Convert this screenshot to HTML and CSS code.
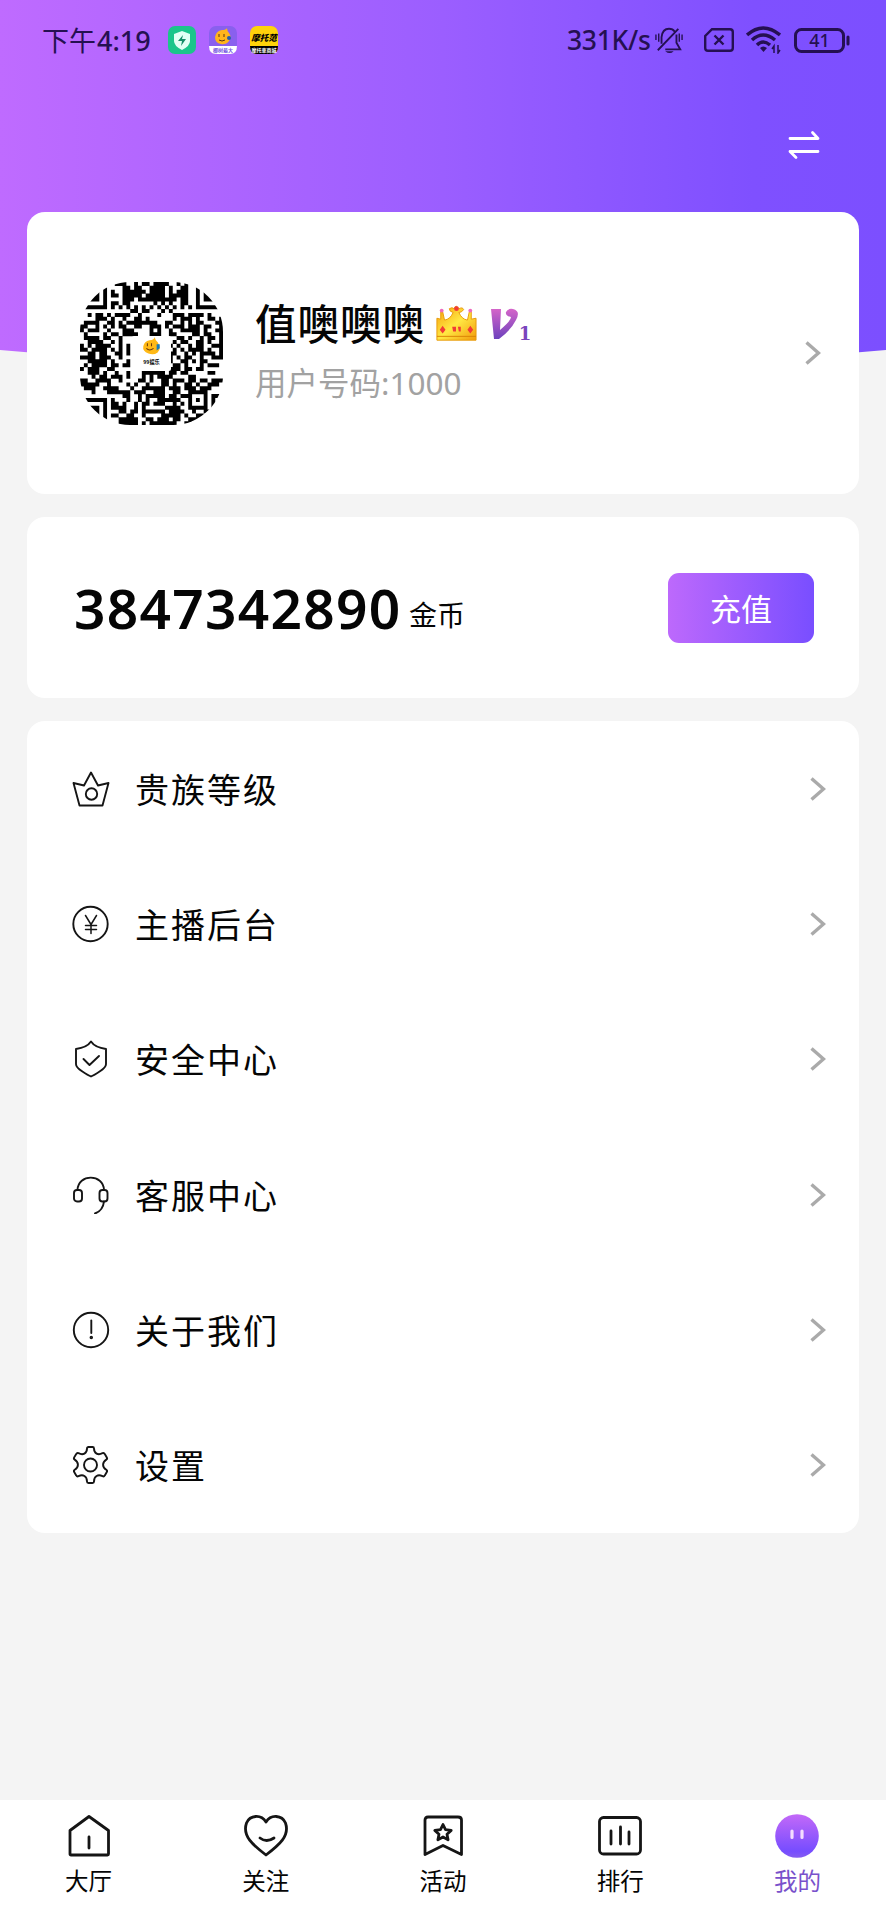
FILE: index.html
```html
<!DOCTYPE html>
<html lang="zh-CN">
<head>
<meta charset="utf-8">
<title>我的</title>
<link rel="stylesheet" href="styles.css">
</head>
<body>
<div class="screen">
  <svg class="hero-bg" viewBox="0 0 886 372" preserveAspectRatio="none">
    <defs><linearGradient id="hero"><stop offset="0" stop-color="#bf6bff"/><stop offset=".5" stop-color="#9b5eff"/><stop offset=".85" stop-color="#7f50ff"/><stop offset="1" stop-color="#7c4fff"/></linearGradient></defs>
    <path fill="url(#hero)" d="M0 0H886V350Q443 390 0 350Z"/>
  </svg>
  <header class="status">
    <span class="time">下午<span class="digits">4:19</span></span>
    <svg class="app-icon" viewBox="0 0 28 28"><rect width="28" height="28" rx="7" fill="#1bc58b"/><path fill="#e3fff5" d="M14 5l8 3v7q0 5-8 9-8-4-8-9V8z"/><path fill="#168c68" d="M15 9l-5 6h4l-1 5 5-7h-4z"/></svg>
    <svg class="app-icon" viewBox="0 0 28 28"><rect width="28" height="28" rx="7" fill="#8960ee"/><path fill="#fff" d="M0 20h28q0 8-7 8H7q-7 0-7-8z"/><path fill="#ffb51c" d="M13 4q4 0 5-2 0 3 2 5 3 4 0 8-3 4-8 3-6-1-6-7 1-6 7-7z"/><path d="M10 8v3M15 8v3M10 14q3 2 6 0" fill="none" stroke="#5a3310"/><circle cx="20" cy="12" r="2" fill="#225caf"/><text x="14" y="26" class="tiny violet">椰树最大</text></svg>
    <svg class="app-icon" viewBox="0 0 28 28"><rect width="28" height="28" rx="7" fill="#ffd30a"/><path d="M0 20h28q0 8-7 8H7q-7 0-7-8z"/><text x="14" y="15" class="moto">摩托范</text><text x="14" y="26" class="tiny white">摩托車商城</text></svg>
    <span class="speed">331K/s</span>
    <svg class="bell" viewBox="0 0 30 28"><g fill="none" stroke="#251052" stroke-width="2"><path d="M7 18V11q1-9 8-9 4 0 6 3M23 8v9l4 7H11M3 25L25 2"/><path d="M1 8v6M4 7v9M26 7v9M29 8v6" stroke-width="1.5"/></g><path fill="#251052" d="M11 26h9q-4 4-9 0z"/></svg>
    <svg class="sim" viewBox="0 0 30 24"><path d="M8 1.200H26q2.800 0 2.800 2.800V20q0 2.800-2.800 2.800H4q-2.800 0-2.800-2.800V8zM10.500 7.500l9 9M19.500 7.500l-9 9" fill="none" stroke="#251052" stroke-width="2.400"/></svg>
    <svg class="wifi" viewBox="0 0 35 28"><g fill="none" stroke="#251052" stroke-width="3.500"><path d="M1 9Q17-5 34 9M6 14Q17 4 29 14M11 19Q17 13 24 19"/><path d="M28 27v-7l-2 3M32 19v8l2-3" stroke-width="1.5"/></g><path fill="#251052" d="M14 22q3-3 7 0l-3.500 4z"/></svg>
    <svg class="battery" viewBox="0 0 56 25"><rect x="1.500" y="1.500" width="48" height="22" rx="6" fill="none" stroke="#251052" stroke-width="3"/><path d="M54 9v7" stroke="#251052" stroke-width="3" stroke-linecap="round"/><text x="25.500" y="18.500" class="percent">41</text></svg>
  </header>
  <div class="tools">
    <svg class="swap" viewBox="0 0 32 30" fill="none" stroke="#fff" stroke-width="2.800" stroke-linecap="round" stroke-linejoin="round"><path d="M2 8.500H30L24.500 2.500M30 21.500H2l6 6"/></svg>
  </div>
  <main class="cards">
    <section class="card profile">
      <div class="avatar">
        <svg id="qr" class="qr" viewBox="0 0 37 37"></svg>
        <svg class="qr-logo" viewBox="0 0 38 34"><rect width="38" height="34" rx="2" fill="#fff"/><path fill="#ffb915" d="M17 4q5 0 5-3 1 4 3 5 4 6 0 10-4 3-9 1-6-2-5-7 1-5 6-6z"/><path d="M15 7v3M19 7v3M14 12q3 3 7 0" fill="none" stroke="#6c3a0b"/><path fill="#167bbd" d="M24 8h3v4l-3 2z"/><text x="19" y="27" class="tiny">99娱乐</text></svg>
      </div>
      <div class="identity">
        <div class="name-row"><h1 class="name">值噢噢噢</h1>
          <svg class="crown" viewBox="0 0 44 40"><defs><linearGradient id="gold" x1="0" x2="1" y2="1"><stop stop-color="#f69b08"/><stop offset=".5" stop-color="#ffe843"/><stop offset="1" stop-color="#f29a0a"/></linearGradient></defs><path d="M2 38V15l4 1V8h2l2 9q6-1 9-8-4-1-4-4 3-2 5 0 2-5 5 0 4-2 5 1-2 3-5 3 3 7 9 8l2-9h2v8l5-1v23z" fill="url(#gold)" stroke="#e89a08"/><path d="M2 34h41" stroke="#d98205"/><g fill="#f13b35"><circle cx="7" cy="7" r="2" fill="#ee6abd"/><circle cx="37" cy="7" r="2" fill="#ee6abd"/><circle cx="22.500" cy="5" r="2.500"/><path d="M8 23l3 4-3 4-3-4zM37 23l3 4-3 4-3-4zM18 24h4v5h-3zM24 24h3v5h-2z"/></g></svg>
          <svg class="vip" viewBox="0 0 44 36"><defs><linearGradient id="v" x2="0" y2="1"><stop stop-color="#d565c9"/><stop offset="1" stop-color="#6d42bd"/></linearGradient></defs><path fill="url(#v)" d="M1 2h10L10 23q11-9 11-13-6-1-5-5 2-4 7-3 8 2 3 11-5 10-17 19H4z"/><text x="35" y="33" class="vip-num">1</text></svg>
        </div>
        <p class="uid">用户号码:1000</p>
      </div>
      <svg class="chevron" viewBox="0 0 16 24"><path d="M1.500 1.500L13.500 12l-12 10.500"/></svg>
    </section>
    <section class="card wallet">
      <span class="coins">3847342890</span><span class="unit">金币</span>
      <button class="recharge">充值</button>
    </section>
    <nav class="card menu">
      <a class="row"><svg class="icon" viewBox="0 0 38 38"><path d="M1.500 13L12 15.500 19 2.500l7 13L36.500 13l-6 22.500H7.500z"/><circle cx="19.500" cy="24" r="5.700"/></svg><span>贵族等级</span><svg class="chevron" viewBox="0 0 16 24"><path d="M1.500 1.500L13.500 12l-12 10.500"/></svg></a>
      <a class="row"><svg class="icon" viewBox="0 0 38 38"><circle cx="18.500" cy="19" r="17.200"/><path d="M13.500 10.500l5.500 9 5.500-9M13.500 20.500h11M13.500 24.500h11M19 20v8.500" stroke-width="1.500"/></svg><span>主播后台</span><svg class="chevron" viewBox="0 0 16 24"><path d="M1.500 1.500L13.500 12l-12 10.500"/></svg></a>
      <a class="row"><svg class="icon" viewBox="0 0 38 38"><path d="M19 1.500Q23 7.500 34 9V24q0 5-15 12.500Q4 29 4 24V9Q15 7.500 19 1.500zM11.500 19l6 6L27 16"/></svg><span>安全中心</span><svg class="chevron" viewBox="0 0 16 24"><path d="M1.500 1.500L13.500 12l-12 10.500"/></svg></a>
      <a class="row"><svg class="icon" viewBox="0 0 38 38"><rect x="2" y="14" width="8" height="11.500" rx="3"/><rect x="27.500" y="14" width="8" height="11.500" rx="3"/><path d="M5.500 14C6-2.500 31.500-2.500 32 14M32 25.500q-1 9-9 12"/></svg><span>客服中心</span><svg class="chevron" viewBox="0 0 16 24"><path d="M1.500 1.500L13.500 12l-12 10.500"/></svg></a>
      <a class="row"><svg class="icon" viewBox="0 0 38 38"><circle cx="19" cy="19" r="17.200"/><path d="M19.300 9.500v12.500"/><circle cx="19.300" cy="26.500" r=".8"/></svg><span>关于我们</span><svg class="chevron" viewBox="0 0 16 24"><path d="M1.500 1.500L13.500 12l-12 10.500"/></svg></a>
      <a class="row"><svg class="icon" viewBox="0 0 38 38"><path d="M15 2.500q0-1.500 1.500-1.500h4q1.500 0 1.500 1.500c0 5 4 7 8.500 4.700q1.500-.7 2.300.8l2 3.400q.8 1.400-.5 2.200c-4.300 2.700-4.300 7.500 0 10.200q1.300.8.5 2.200l-2 3.400q-.8 1.500-2.300.8C26 28 22 30 22 35.500q0 1.500-1.500 1.500h-4Q15 37 15 35.500c0-5.500-4-7.500-8.500-5.300q-1.500.7-2.300-.8l-2-3.400q-.8-1.400.5-2.200c4.300-2.700 4.300-7.500 0-10.200q-1.300-.8-.5-2.200l2-3.400q.8-1.500 2.300-.8C11 9.500 15 7.500 15 2.500z"/><circle cx="18.500" cy="19" r="6.500"/></svg><span>设置</span><svg class="chevron" viewBox="0 0 16 24"><path d="M1.500 1.500L13.500 12l-12 10.500"/></svg></a>
    </nav>
  </main>
  <footer class="tabs">
    <a class="tab"><svg class="tab-icon" viewBox="0 0 44 44"><path d="M3 40V16.500L22 2.500l19.500 14V40q0 1-1 1H4q-1 0-1-1zM22 23v11"/></svg><span>大厅</span></a>
    <a class="tab"><svg class="tab-icon" viewBox="0 0 44 44"><path d="M22 8C17 0 6 1 2.500 9-2 22 9 31 22 41 35 31 46 22 41.500 9 38 1 27 0 22 8zM16 24q6.500 5 14 0"/></svg><span>关注</span></a>
    <a class="tab"><svg class="tab-icon" viewBox="0 0 44 44"><path d="M4 40.500V6q0-3 3-3H37q3.500 0 3.500 3V40.500L22 31.500z"/><path d="M22 10.500l2.500 5.200 5.700.7-4.200 3.800 1.100 5.600-5.100-2.800-5.100 2.800 1.100-5.600-4.200-3.800 5.700-.7z"/></svg><span>活动</span></a>
    <a class="tab"><svg class="tab-icon" viewBox="0 0 44 44"><rect x="1.500" y="3.500" width="41" height="36.500" rx="4"/><path d="M13 17v13M22.500 13v17M31 18v12"/></svg><span>排行</span></a>
    <a class="tab active"><svg class="tab-icon" viewBox="0 0 44 44"><defs><linearGradient id="face" x2="0" y2="1"><stop stop-color="#c369f8"/><stop offset=".85" stop-color="#764dff"/><stop offset="1" stop-color="#855cf0"/></linearGradient></defs><circle cx="22" cy="22" r="21.800" fill="url(#face)" stroke="none"/><path d="M17 17v6.500M27 17v6.500" stroke="#f3dcff" stroke-width="3.200"/></svg><span>我的</span></a>
  </footer>
</div>
<script src="qr.js"></script>
</body>
</html>
```
FILE: styles.css
```css
* { box-sizing: border-box; }
body { margin: 0; background: #f4f4f4; color: #050505; font-family: "Noto Sans", "Noto Sans CJK SC", sans-serif; }
svg { display: block; flex: none; }
.screen { position: relative; height: 1920px; display: flex; flex-direction: column; overflow: hidden; }
.hero-bg { position: absolute; inset: 0 0 auto; width: 886px; height: 372px; }
.status { position: relative; height: 80px; padding-left: 42px; display: flex; align-items: center; color: #251052; white-space: nowrap; }
.time { width: 126px; font: 400 27px/40px "Noto Sans CJK SC", sans-serif; }
.digits { font: 500 27px/40px "Noto Sans", sans-serif; margin-left: 1px; }
.app-icon { width: 28px; height: 28px; margin-right: 13px; }
.speed { margin-left: 276px; width: 88px; font-size: 26.500px; font-weight: 500; letter-spacing: -.3px; }
.bell { width: 28px; height: 28px; }
.sim { width: 30px; height: 24px; margin-left: 21px; }
.wifi { width: 35px; height: 28px; margin-left: 12px; }
.battery { width: 56px; height: 25px; margin-left: 13px; }
.percent { font: 500 18px "Noto Sans", sans-serif; fill: #251052; text-anchor: middle; }
.tiny { font: bold 5px "Noto Sans CJK SC", sans-serif; text-anchor: middle; }
.violet { fill: #7552df; }
.white { fill: #fff; }
.moto { font: italic 900 8.500px "Noto Sans CJK SC", sans-serif; text-anchor: middle; }
.tools { position: relative; height: 132px; padding: 50px 66px 0; display: flex; justify-content: flex-end; }
.swap { width: 32px; height: 30px; }
.cards { position: relative; flex: 1; padding: 0 27px; display: flex; flex-direction: column; gap: 23px; }
.card { background: #fff; border-radius: 18px; }
.profile { height: 282px; padding: 0 38px 0 53px; display: flex; align-items: center; }
.avatar { display: grid; place-items: center; }
.avatar > svg { grid-area: 1 / 1; }
.qr { width: 143px; height: 143px; border-radius: 50px; }
.qr-logo { width: 39px; height: 35px; }
.identity { margin-left: 32px; flex: 1; }
.name-row { display: flex; align-items: center; height: 56px; }
.name { margin: -3px 0 0; width: 180px; font: 500 41.500px/56px "Noto Sans CJK SC", sans-serif; letter-spacing: 1px; white-space: nowrap; }
.crown { width: 42px; height: 40px; }
.vip { width: 44px; height: 36px; margin: 4px 0 0 13px; }
.vip-num { font: bold 18px "DejaVu Serif", serif; fill: #7a45bd; text-anchor: middle; }
.uid { margin: 10px 0 6px; color: #a2a2a2; font: 400 31.500px/44px "Noto Sans", "Noto Sans CJK SC", sans-serif; }
.chevron { width: 16px; height: 24px; fill: none; stroke: #aaa; stroke-width: 3.400px; }
.wallet { height: 181px; padding: 0 45px 0 47px; display: flex; align-items: center; }
.coins { width: 335px; font: 600 55px/75px "Noto Sans", sans-serif; letter-spacing: 1.300px; }
.unit { font: 400 28px/40px "Noto Sans CJK SC", sans-serif; margin-top: 13px; }
.recharge { margin-left: auto; width: 146px; height: 70px; border: 0; border-radius: 11px; background: linear-gradient(90deg, #bd69fc, #794eff); color: #fff; font: 400 31px/44px "Noto Sans CJK SC", sans-serif; }
.menu { height: 812px; }
.row { height: 135.330px; padding: 0 33px 0 45px; display: flex; align-items: center; }
.row span { flex: 1; margin-left: 25px; font: 400 34px/50px "Noto Sans CJK SC", sans-serif; letter-spacing: 2px; }
.icon { width: 38px; height: 38px; fill: none; stroke: #151515; stroke-width: 1.900px; stroke-linejoin: round; stroke-linecap: round; }
.tabs { position: relative; height: 120px; background: #fff; display: grid; grid-template-columns: repeat(5, 1fr); }
.tab { display: flex; flex-direction: column; align-items: center; padding-top: 14px; font: 400 23.500px/36px "Noto Sans CJK SC", sans-serif; }
.tab span { margin-top: 4px; }
.tab-icon { width: 44px; height: 44px; fill: none; stroke: #151515; stroke-width: 2.800px; stroke-linejoin: round; stroke-linecap: round; }
.active { color: #7951cb; }
```
FILE: qr.js
```js
// Each string is one module row; "#" marks a dark module.
const rows = [
  "#######..###..#.##.####..#.#..#######",
  "#.....#....##.##..####.#..##..#.....#",
  "#.###.#.#..######.####.#.###..#.###.#",
  "#.###.#.##.#####.#####.#####..#.###.#",
  "#.###.#....###.##########.##..#.###.#",
  "#.....#.##.##......#.#.#..##..#.....#",
  "#######.#.#.#.#.#.#.#.#.#.#.#.#######",
  ".............##.##...#.#.............",
  "..#.##.#.####..#....#...###.####.#...",
  "....###.#..#..##.#......#.###.#..##.#",
  ".####..##.#.########..##..#.#.##...##",
  "##..#.#.#.##..##..###.#.###.###.##..#",
  "#.###..#...###....#.#..#..#####.#..##",
  ".#....#.##.####...###..##....##.##..#",
  ".####.##..#..............##.#..#.##.#",
  "..####..#.#.............#.##..##.#..#",
  "#.#.####..#.#..........#.#..#.##..###",
  "##.####.#.#.#...........#.#.####.#..#",
  "..##.##..##.#..........##..#.#.####.#",
  "####.###..#............#.#.##..#..###",
  "..#####.#...#..........#..##.#.##....",
  ".#.####.##.##...........##.#...#.###.",
  "#.###..##..............###.##.##.....",
  "..###.#..#..#...######.##.##.....##..",
  "...#.##.###.#...#.#.####....##.......",
  "##..####..#....##.#..##.###.##.##.###",
  "#####..#....#.#..#...##.#..##.#..###.",
  ".###..####...#..######.###.###.###...",
  "...#...######.###..###..##..#####....",
  "...........##..#.#####.##.###...#.###",
  "#######.#...#..#.#..######..#.#.#.#..",
  "#.....#.##.#..#.##.###..#.#.#...#.##.",
  "#.###.#.####..#.#.....####..#####.#..",
  "#.###.#...##.##.######.####..#..###..",
  "#.###.#.##..##..#....#####.#..##.##..",
  "#.....#...#####..##.###.##..####..#..",
  "#######...#####.#.#######..##.##.#..."
];
const path = document.createElementNS("http://www.w3.org/2000/svg", "path");
path.setAttribute("d", rows.map((row, y) =>
  [...row.matchAll(/#+/g)].map(m => `M${m.index} ${y}h${m[0].length}v1.03h-${m[0].length}z`).join("")
).join(""));
document.getElementById("qr").append(path);
```
